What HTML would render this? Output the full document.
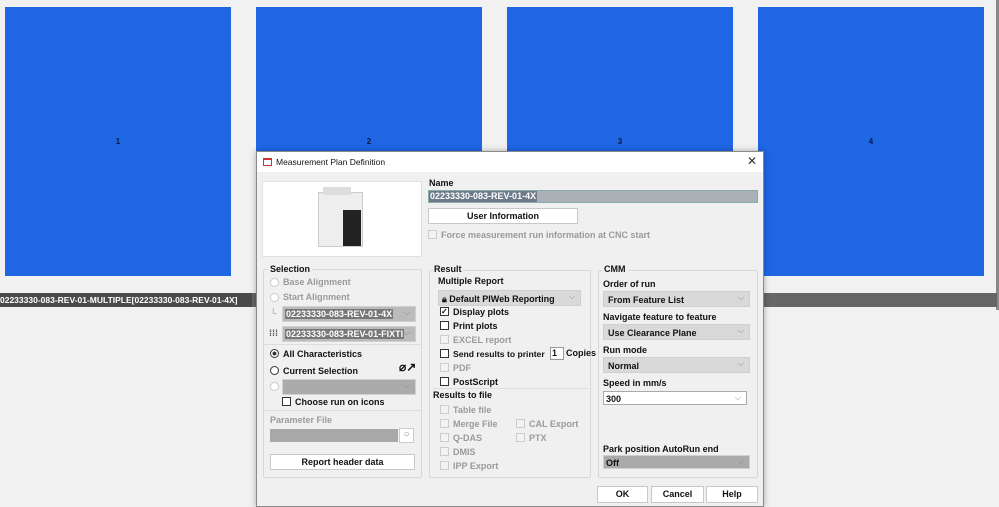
<!DOCTYPE html>
<html><head><style>
*{margin:0;padding:0;box-sizing:border-box}
body{width:999px;height:507px;background:#f1f1f1;position:relative;overflow:hidden;font-family:"Liberation Sans",sans-serif;font-size:9px;font-weight:bold;color:#111}
.a{position:absolute}
.blue{background:#1f66e5;top:7px;height:269px;width:226px;display:flex;align-items:center;justify-content:center;font-size:8px;color:#0a1a40}
.g{border:1px solid #d8d8d8;border-radius:2px}
.lbl{position:absolute;white-space:nowrap}
.dis{color:#9a9a9a}
.cb{position:absolute;width:9px;height:9px;border:1px solid #333;background:#fff}
.cb.d{border-color:#ccc;background:#f3f3f3}
.rd{position:absolute;width:9px;height:9px;border:1px solid #333;border-radius:50%;background:#fff}
.rd.d{border-color:#ccc}
.sel{position:absolute;background:#d9d9d9;height:16px;border:1px solid #d0d0d0;padding:3px 4px}
.sel:after{content:"⌵";position:absolute;right:5px;top:1px;color:#888;font-weight:normal;font-size:8px}
.btn{position:absolute;background:#fff;border:1px solid #c8c8c8;text-align:center;line-height:14px}
</style></head><body>
<div class="a blue" style="left:5px">1</div>
<div class="a blue" style="left:256px">2</div>
<div class="a blue" style="left:507px">3</div>
<div class="a blue" style="left:758px">4</div>
<div class="a" style="left:996px;top:0;width:3px;height:310px;background:#888"></div>
<div class="a" style="left:0;top:293px;width:997px;height:14px;background:#666"></div>
<div class="a" style="left:0;top:293px;width:252px;height:14px;background:#4a4a4a;color:#fff;font-size:8.5px;line-height:14px;white-space:nowrap;overflow:hidden">02233330-083-REV-01-MULTIPLE[02233330-083-REV-01-4X]</div>

<div class="a" style="left:256px;top:151px;width:508px;height:356px;background:#f0f0f0;border:1px solid #8a8a8a;box-shadow:0 0 6px rgba(0,0,0,.3)">
 <div class="a" style="left:0;top:0;width:506px;height:20px;background:#fff"></div>
 <div class="a" style="left:6px;top:6px;width:9px;height:8px;border:1px solid #c33;border-top-width:2px"></div>
 <div class="lbl" style="left:19px;top:5px;font-weight:normal;font-size:8.5px">Measurement Plan Definition</div>
 <div class="lbl" style="left:490px;top:2px;font-weight:normal;font-size:12px;color:#333">✕</div>

 <div class="a" style="left:5px;top:29px;width:160px;height:76px;background:#fff;border:1px solid #e0e0e0">
  <div class="a" style="left:55px;top:10px;width:45px;height:55px;background:#eee;border:1px solid #ccc"></div>
  <div class="a" style="left:80px;top:28px;width:18px;height:36px;background:#222"></div>
  <div class="a" style="left:60px;top:5px;width:28px;height:8px;background:#ddd"></div>
 </div>

 <div class="lbl" style="left:172px;top:26px">Name</div>
 <div class="a" style="left:171px;top:38px;width:330px;height:13px;background:#aab0b6;border:1px solid #8aa"></div>
 <div class="a" style="left:172px;top:39px;height:11px;background:#6c7a8a;color:#fff;line-height:11px;padding:0 1px">02233330-083-REV-01-4X</div>
 <div class="btn" style="left:171px;top:56px;width:150px;height:16px">User Information</div>
 <div class="cb d" style="left:171px;top:78px"></div>
 <div class="lbl dis" style="left:184px;top:78px">Force measurement run information at CNC start</div>

 <div class="a g" style="left:6px;top:117px;width:159px;height:209px"></div>
 <div class="lbl" style="left:11px;top:112px;background:#f0f0f0;padding:0 2px">Selection</div>
 <div class="rd d" style="left:13px;top:126px"></div><div class="lbl dis" style="left:26px;top:125px">Base Alignment</div>
 <div class="rd d" style="left:13px;top:141px"></div><div class="lbl dis" style="left:26px;top:140px">Start Alignment</div>
 <div class="lbl dis" style="left:13px;top:156px">└</div>
 <div class="sel" style="left:25px;top:154px;width:134px;background:#bbb;padding:2px"><span style="background:#777;color:#fff;padding:0 1px">02233330-083-REV-01-4X</span></div>
 <div class="lbl" style="left:12px;top:176px;color:#555">⁞⁞⁞</div>
 <div class="sel" style="left:25px;top:174px;width:134px;background:#bbb;padding:2px"><span style="background:#777;color:#fff;padding:0 1px">02233330-083-REV-01-FIXTI</span></div>
 <div class="a" style="left:7px;top:192px;width:157px;border-top:1px solid #ddd"></div>
 <div class="rd" style="left:13px;top:197px;background:radial-gradient(circle,#333 35%,#fff 45%)"></div><div class="lbl" style="left:26px;top:197px">All Characteristics</div>
 <div class="rd" style="left:13px;top:214px"></div><div class="lbl" style="left:26px;top:214px">Current Selection</div>
 <div class="lbl" style="left:142px;top:208px;font-size:12px">⌀↗</div>
 <div class="rd d" style="left:13px;top:230px"></div>
 <div class="sel" style="left:25px;top:227px;width:134px;background:#ababab"></div>
 <div class="cb" style="left:25px;top:245px"></div><div class="lbl" style="left:38px;top:245px">Choose run on icons</div>
 <div class="a" style="left:7px;top:258px;width:157px;border-top:1px solid #ddd"></div>
 <div class="lbl dis" style="left:13px;top:263px">Parameter File</div>
 <div class="a" style="left:13px;top:277px;width:128px;height:13px;background:#a8a8a8"></div>
 <div class="a" style="left:142px;top:276px;width:15px;height:15px;background:#fff;border:1px solid #ccc;color:#888;font-size:10px;text-align:center;font-weight:normal">○</div>
 <div class="btn" style="left:13px;top:302px;width:145px;height:16px">Report header data</div>

 <div class="a g" style="left:172px;top:118px;width:162px;height:208px"></div>
 <div class="lbl" style="left:176px;top:112px;background:#f0f0f0;padding:0 1px">Result</div>
 <div class="lbl" style="left:181px;top:124px">Multiple Report</div>
 <div class="sel" style="left:181px;top:138px;width:143px;padding:3px 3px">🔒︎ Default PIWeb Reporting</div>
 <div class="cb" style="left:183px;top:155px;font-size:8px;line-height:7px">✓</div><div class="lbl" style="left:196px;top:155px">Display plots</div>
 <div class="cb" style="left:183px;top:169px"></div><div class="lbl" style="left:196px;top:169px">Print plots</div>
 <div class="cb d" style="left:183px;top:183px"></div><div class="lbl dis" style="left:196px;top:183px">EXCEL report</div>
 <div class="cb" style="left:183px;top:197px"></div><div class="lbl" style="left:196px;top:197px;font-size:8.6px">Send results to printer</div>
 <div class="a" style="left:293px;top:195px;width:14px;height:13px;background:#fff;border:1px solid #999;padding-left:1px">1</div>
 <div class="lbl" style="left:309px;top:196px">Copies</div>
 <div class="cb d" style="left:183px;top:211px"></div><div class="lbl dis" style="left:196px;top:211px">PDF</div>
 <div class="cb" style="left:183px;top:225px"></div><div class="lbl" style="left:196px;top:225px">PostScript</div>
 <div class="a" style="left:176px;top:236px;width:155px;border-top:1px solid #ddd"></div>
 <div class="lbl" style="left:176px;top:238px">Results to file</div>
 <div class="cb d" style="left:183px;top:253px"></div><div class="lbl dis" style="left:196px;top:253px">Table file</div>
 <div class="cb d" style="left:183px;top:267px"></div><div class="lbl dis" style="left:196px;top:267px">Merge File</div>
 <div class="cb d" style="left:259px;top:267px"></div><div class="lbl dis" style="left:272px;top:267px">CAL Export</div>
 <div class="cb d" style="left:183px;top:281px"></div><div class="lbl dis" style="left:196px;top:281px">Q-DAS</div>
 <div class="cb d" style="left:259px;top:281px"></div><div class="lbl dis" style="left:272px;top:281px">PTX</div>
 <div class="cb d" style="left:183px;top:295px"></div><div class="lbl dis" style="left:196px;top:295px">DMIS</div>
 <div class="cb d" style="left:183px;top:309px"></div><div class="lbl dis" style="left:196px;top:309px">IPP Export</div>

 <div class="a g" style="left:341px;top:118px;width:160px;height:208px"></div>
 <div class="lbl" style="left:345px;top:112px;background:#f0f0f0;padding:0 2px">CMM</div>
 <div class="lbl" style="left:346px;top:127px">Order of run</div>
 <div class="sel" style="left:346px;top:139px;width:147px;height:16px;padding:3px 4px">From Feature List</div>
 <div class="lbl" style="left:346px;top:160px">Navigate feature to feature</div>
 <div class="sel" style="left:346px;top:172px;width:147px;height:16px;padding:3px 4px">Use Clearance Plane</div>
 <div class="lbl" style="left:346px;top:193px">Run mode</div>
 <div class="sel" style="left:346px;top:205px;width:147px;height:16px;padding:3px 4px">Normal</div>
 <div class="lbl" style="left:346px;top:226px">Speed in mm/s</div>
 <div class="sel" style="left:346px;top:239px;width:144px;height:14px;padding:2px;background:#fff;border-color:#aaa">300</div>
 <div class="lbl" style="left:346px;top:292px">Park position AutoRun end</div>
 <div class="sel" style="left:346px;top:303px;width:147px;height:14px;padding:2px;background:#aaa">Off</div>

 <div class="btn" style="left:340px;top:334px;width:51px;height:17px">OK</div>
 <div class="btn" style="left:394px;top:334px;width:53px;height:17px">Cancel</div>
 <div class="btn" style="left:449px;top:334px;width:52px;height:17px">Help</div>
</div>
</body></html>
